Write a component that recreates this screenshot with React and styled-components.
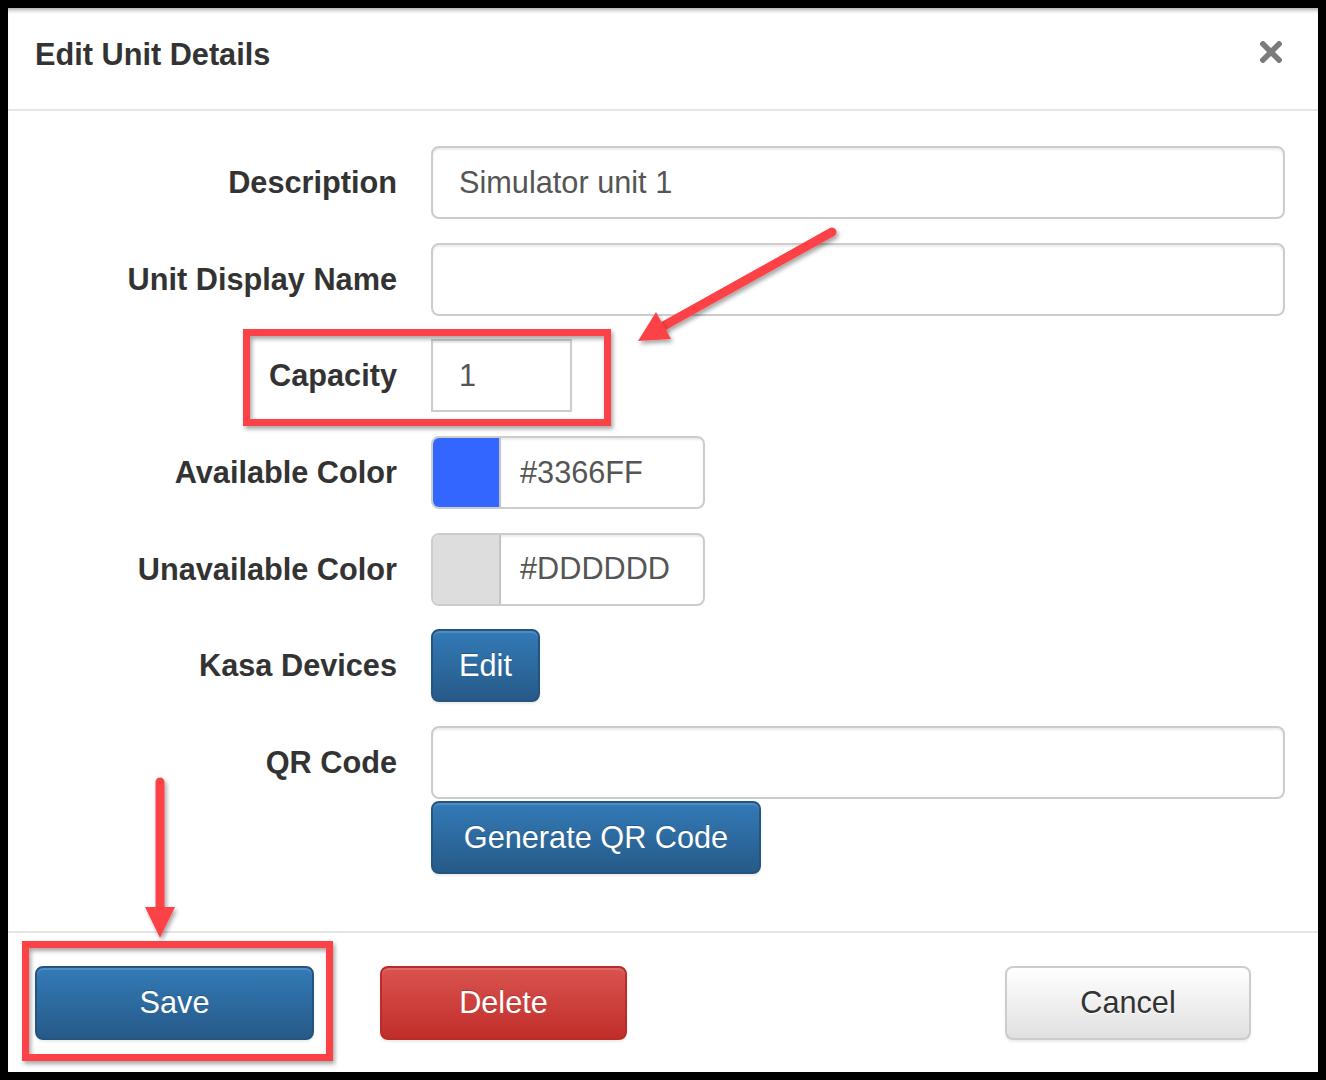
import React from "react";
import styled, { createGlobalStyle } from "styled-components";

const GlobalStyle = createGlobalStyle`
  html, body {
    margin: 0;
    padding: 0;
    background: #000;
  }
  * {
    box-sizing: border-box;
  }
`;

const FONT = 30.7;

const Frame = styled.div`
  position: relative;
  width: 1326px;
  height: 1080px;
  padding: 8px;
  background: #000;
  font-family: "Liberation Sans", Arial, sans-serif;
`;

const Modal = styled.div`
  height: 100%;
  background: #fff;
  box-shadow: inset 0 5px 4px -3px rgba(0, 0, 0, 0.35);
  display: flex;
  flex-direction: column;
`;

const Header = styled.div`
  display: flex;
  align-items: center;
  padding: 32px 36px 39px 27px;
  border-bottom: 2px solid #e5e5e5;
`;

const Title = styled.h4`
  margin: 0;
  font-size: ${FONT}px;
  line-height: 30px;
  font-weight: bold;
  color: #333;
`;

const CloseBtn = styled.button`
  margin-left: auto;
  border: 0;
  padding: 0;
  background: none;
  display: flex;
  margin-top: -6px;
`;

const Body = styled.div`
  display: grid;
  grid-template-columns: 389px 1fr;
  column-gap: 34px;
  row-gap: 23.7px;
  padding: 35px 33px 56px 0;
`;

const Label = styled.label`
  text-align: right;
  font-size: ${FONT}px;
  font-weight: bold;
  line-height: 73px;
  color: #333;
  white-space: nowrap;
`;

const Field = styled.div`
  display: flex;
  flex-direction: column;
  align-items: flex-start;
  gap: 2px;
`;

const Input = styled.div`
  width: ${(p) => p.$w || "100%"};
  height: 73px;
  padding: 0 26px;
  display: flex;
  align-items: center;
  border: 2px solid #ccc;
  border-radius: ${(p) => (p.$square ? "0" : "8px")};
  box-shadow: inset 0 2px 2px rgba(0, 0, 0, 0.075);
  font-size: ${FONT}px;
  color: #555;
  background: #fff;
`;

const ColorGroup = styled.div`
  display: flex;
  width: 274px;
  height: 73px;
  border: 2px solid #ccc;
  border-radius: 8px;
  overflow: hidden;
`;

const Swatch = styled.div`
  width: 68px;
  background: ${(p) => p.$color};
  border-right: 2px solid #c4c4c4;
`;

const ColorText = styled.div`
  flex: 1;
  display: flex;
  align-items: center;
  padding-left: 19px;
  font-size: ${FONT}px;
  color: #555;
  box-shadow: inset 0 2px 2px rgba(0, 0, 0, 0.075);
`;

const variants = {
  primary: `
    color: #fff;
    background: linear-gradient(to bottom, #337ab7 0, #265a88 100%);
    border-color: #245580;
    text-shadow: 0 -1px 0 rgba(0, 0, 0, 0.2);
  `,
  danger: `
    color: #fff;
    background: linear-gradient(to bottom, #d9534f 0, #c12e2a 100%);
    border-color: #b92c28;
    text-shadow: 0 -1px 0 rgba(0, 0, 0, 0.2);
  `,
  default: `
    color: #333;
    background: linear-gradient(to bottom, #fff 0, #e0e0e0 100%);
    border-color: #ccc;
    text-shadow: 0 1px 0 #fff;
  `,
};

const Button = styled.button`
  width: ${(p) => p.$w}px;
  height: ${(p) => p.$h || 73}px;
  border: 2px solid;
  border-radius: 8px;
  font-family: "Liberation Sans", Arial, sans-serif;
  font-size: ${FONT}px;
  padding: 0;
  box-shadow: inset 0 2px 0 rgba(255, 255, 255, 0.15), 0 2px 2px rgba(0, 0, 0, 0.075);
  ${(p) => variants[p.$variant || "primary"]}
`;

const Footer = styled.div`
  display: flex;
  align-items: center;
  gap: 66px;
  padding: 33px 67px 32px 27px;
  border-top: 2px solid #e5e5e5;
  margin-top: auto;

  & > :last-child {
    margin-left: auto;
  }
`;

const Overlay = styled.svg`
  position: absolute;
  left: 0;
  top: 0;
  pointer-events: none;
`;

const RED = "#fd4346";

const rows = [
  { label: "Description", value: "Simulator unit 1" },
  { label: "Unit Display Name", value: "" },
];

export default function App() {
  return (
    <>
      <GlobalStyle />
      <Frame>
        <Modal>
          <Header>
            <Title>Edit Unit Details</Title>
            <CloseBtn aria-label="Close">
              <svg width="22" height="22" viewBox="0 0 22 22">
                <path
                  d="M3 3 L19 19 M19 3 L3 19"
                  stroke="#7c7c7c"
                  strokeWidth="5.5"
                  strokeLinecap="square"
                />
              </svg>
            </CloseBtn>
          </Header>

          <Body>
            {rows.map((r) => (
              <React.Fragment key={r.label}>
                <Label>{r.label}</Label>
                <Field>
                  <Input>{r.value}</Input>
                </Field>
              </React.Fragment>
            ))}

            <Label>Capacity</Label>
            <Field>
              <Input $w="141px" $square>
                1
              </Input>
            </Field>

            <Label>Available Color</Label>
            <Field>
              <ColorGroup>
                <Swatch $color="#3366FF" />
                <ColorText>#3366FF</ColorText>
              </ColorGroup>
            </Field>

            <Label>Unavailable Color</Label>
            <Field>
              <ColorGroup>
                <Swatch $color="#DDDDDD" />
                <ColorText>#DDDDDD</ColorText>
              </ColorGroup>
            </Field>

            <Label>Kasa Devices</Label>
            <Field>
              <Button $w={109}>Edit</Button>
            </Field>

            <Label>QR Code</Label>
            <Field>
              <Input />
              <Button $w={330}>Generate QR Code</Button>
            </Field>
          </Body>

          <Footer>
            <Button $w={279} $h={74}>
              Save
            </Button>
            <Button $w={247} $h={74} $variant="danger">
              Delete
            </Button>
            <Button $w={246} $h={74} $variant="default">
              Cancel
            </Button>
          </Footer>
        </Modal>

        {/* screenshot annotations */}
        <Overlay width="1326" height="1080" viewBox="0 0 1326 1080">
          <defs>
            <filter id="shadow" x="-10%" y="-10%" width="130%" height="130%">
              <feDropShadow dx="2" dy="3" stdDeviation="2" floodColor="#000" floodOpacity="0.35" />
            </filter>
          </defs>
          <g filter="url(#shadow)" fill="none" stroke={RED}>
            <rect x="246.5" y="332.5" width="361" height="90" strokeWidth="7" />
            <rect x="25.5" y="944.5" width="304" height="113" strokeWidth="7" />
            <line x1="832" y1="232" x2="660" y2="328" strokeWidth="9" strokeLinecap="round" />
            <line x1="160" y1="782" x2="160" y2="912" strokeWidth="9" strokeLinecap="round" />
          </g>
          <g filter="url(#shadow)" fill={RED}>
            <polygon points="638,341 656,312 671,339" />
            <polygon points="145,907 175,907 160,938" />
          </g>
        </Overlay>
      </Frame>
    </>
  );
}
